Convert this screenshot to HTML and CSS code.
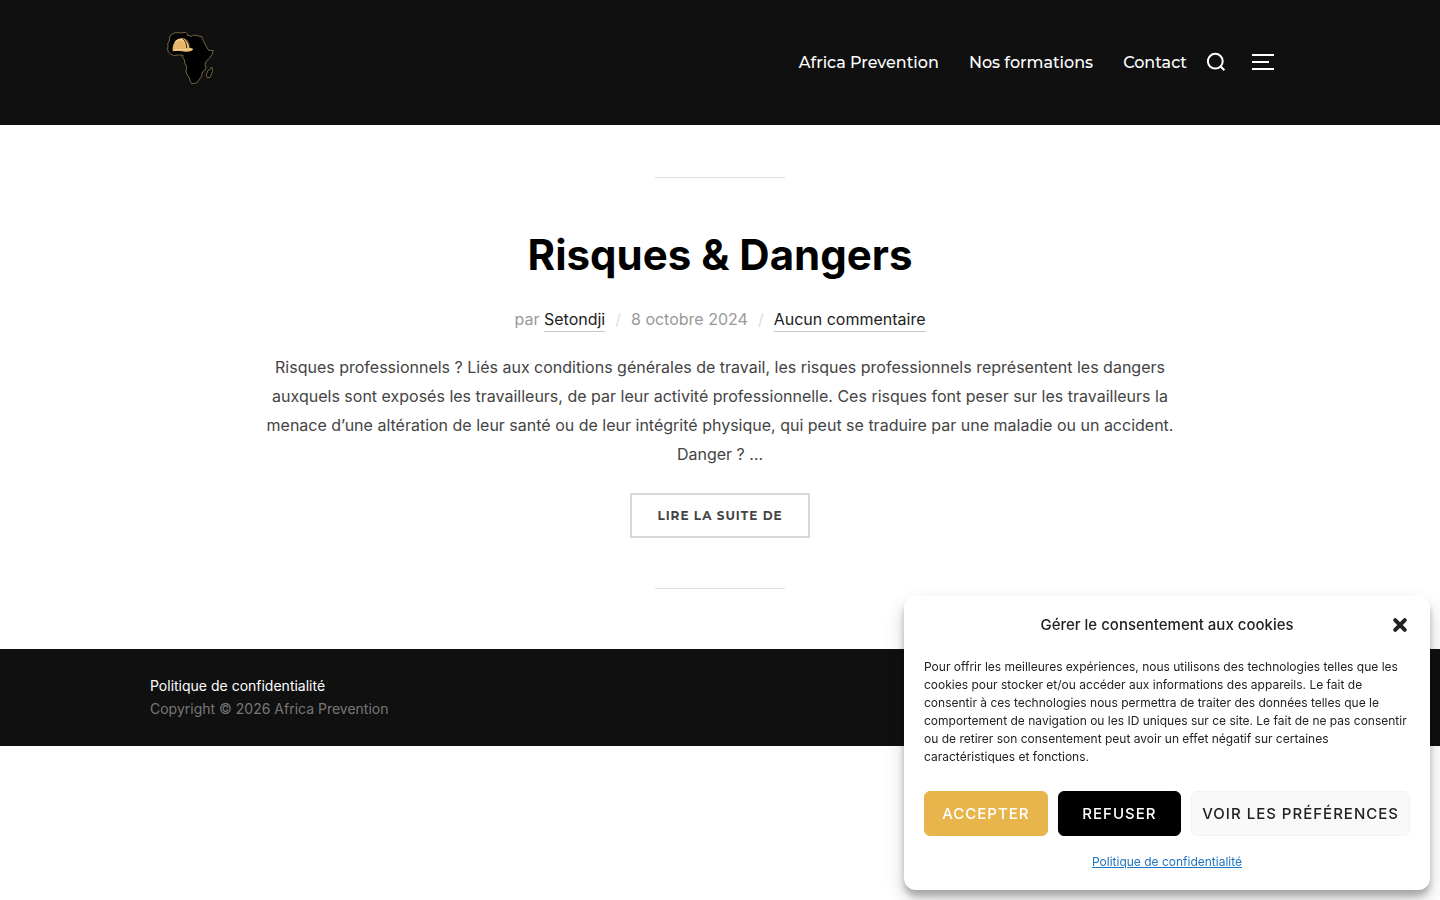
FILE: index.html
```html
<!doctype html>
<html lang="fr">
  <head>
    <meta charset="UTF-8" />
    <meta name="viewport" content="width=device-width, initial-scale=1.0" />
    <title>Africa Prevention</title>
    <link rel="stylesheet" href="styles.css">
  </head>
  <body>
    <header class="site-header">
      <div class="container header-inner">
        <a class="logo" href="#" aria-label="Africa Prevention">
          <svg width="80" height="84" viewBox="0 0 240 252">
            <path
              d="M60 48 67 42 76 38 92 39 107 37 113 42 112 46 125 49 131 45 155 50 158 58 162 66 168 78 176 91 190 92 187 102 178 115 168 124 165 134 168 143 165 150 157 156 155 168 149 177 142 187 134 190 125 191 121 184 117 172 109 159 108 151 111 143 105 130 103 119 98 113 99 106 91 105 83 105 71 107 62 102 55 96 53 88 54 79 53 72 58 63Z"
              fill="#000"
              stroke="#ab945c"
              stroke-width="2"
            />
            <path
              d="M185 141 188 151 184 163 180 172 172 173 169 165 173 153 180 149Z"
              fill="#000"
              stroke="#ab945c"
              stroke-width="2"
            />
            <path d="M68 94C66 70 79 54 98 55c14 1 22 14 22 28l10 4c-3 7-13 9-24 8-14-3-26-2-38-1Z" fill="#e8b66b" />
            <path d="M76 66c5-6 12-8 20-7 8 4 13 13 14 24" fill="none" stroke="#f4cf91" stroke-width="5" />
            <path d="M99 56c7 7 11 16 11 28m-4-27c9 7 13 16 13 26" fill="none" stroke="#2b1c0d" stroke-width="3" />
            <path d="M73 90c18-4 34 3 53-3" fill="none" stroke="#f7d99d" stroke-width="3" />
          </svg>
        </a>
        <nav class="main-nav">
          <a href="#">Africa Prevention</a>
          <a href="#">Nos formations</a>
          <a href="#">Contact</a>
        </nav>
        <button class="icon-button search-button" aria-label="Rechercher">
          <svg width="20" height="20" viewBox="0 0 20 20" fill="none" stroke="#fff" stroke-width="2">
            <circle cx="8.3" cy="9.2" r="7.4" />
            <path d="M13.4 14.3 17.4 18.3" />
          </svg>
        </button>
        <button class="icon-button menu-button" aria-label="Menu">
          <svg width="22" height="16" viewBox="0 0 22 16" fill="#fff">
            <path d="M0 0h22v2H0zM0 7h17v2H0zM0 14h22v2H0z" />
          </svg>
        </button>
      </div>
    </header>

    <main class="content">
      <article class="post">
        <h1>Risques &amp; Dangers</h1>
        <div class="post-meta">
          <span>par <a href="#">Setondji</a></span>
          <span class="slash">/</span>
          <span>8 octobre 2024</span>
          <span class="slash">/</span>
          <span><a href="#">Aucun commentaire</a></span>
        </div>
        <p class="excerpt">
          Risques professionnels ? Liés aux conditions générales de travail, les risques professionnels
          représentent les dangers auxquels sont exposés les travailleurs, de par leur activité
          professionnelle. Ces risques font peser sur les travailleurs la menace d’une altération de
          leur santé ou de leur intégrité physique, qui peut se traduire par une maladie ou un
          accident. Danger ? …
        </p>
        <a class="more-link" href="#">Lire la suite de</a>
      </article>
    </main>

    <footer class="site-footer">
      <div class="container">
        <a href="#">Politique de confidentialité</a>
        <p>Copyright © 2026 Africa Prevention</p>
      </div>
    </footer>

    <section class="cookie-banner" role="dialog" aria-labelledby="cookie-title">
      <div class="cookie-header">
        <h2 id="cookie-title">Gérer le consentement aux cookies</h2>
        <button class="icon-button cookie-close" aria-label="Fermer">
          <svg width="16" height="16" viewBox="0 0 16 16" stroke="#222" stroke-width="4" stroke-linecap="round">
            <path d="M3.2 3.2 12.8 12.8M12.8 3.2 3.2 12.8" />
          </svg>
        </button>
      </div>
      <p class="cookie-text">
        Pour offrir les meilleures expériences, nous utilisons des technologies telles que les cookies
        pour stocker et/ou accéder aux informations des appareils. Le fait de consentir à ces
        technologies nous permettra de traiter des données telles que le comportement de navigation ou
        les ID uniques sur ce site. Le fait de ne pas consentir ou de retirer son consentement peut
        avoir un effet négatif sur certaines caractéristiques et fonctions.
      </p>
      <div class="cookie-buttons">
        <button class="btn btn-accept">Accepter</button>
        <button class="btn btn-deny">Refuser</button>
        <button class="btn btn-prefs">Voir les préférences</button>
      </div>
      <div class="cookie-links">
        <a href="#">Politique de confidentialité</a>
      </div>
    </section>
  </body>
</html>
```
FILE: styles.css
```css
* {
  box-sizing: border-box;
}
body {
  margin: 0;
  font-family: Inter, sans-serif;
  font-size: 16px;
  color: #444;
  background: #fff;
}
h1,
h2,
p {
  margin: 0;
}
.container {
  max-width: 1140px;
  margin: 0 auto;
}

/* Header */
.site-header {
  background: #101010;
}
.header-inner {
  display: flex;
  align-items: center;
  padding: 20px 16px 21px 0;
}
.logo {
  display: flex;
  margin-right: auto;
}
.main-nav {
  display: flex;
  gap: 30px;
  padding-top: 2px;
}
.main-nav a {
  font-family: Montserrat, Inter, sans-serif;
  font-weight: 500;
  line-height: 24px;
  color: #fff;
  text-decoration: none;
}
.icon-button {
  display: flex;
  padding: 0;
  border: none;
  background: none;
  cursor: pointer;
}
.search-button {
  margin-left: 20px;
}
.menu-button {
  margin-left: 25px;
}

/* Post */
.content {
  max-width: 950px;
  margin: 0 auto;
  padding: 52px 20px 60px;
}
.post {
  display: flex;
  flex-direction: column;
  align-items: center;
  text-align: center;
}
.post::before,
.post::after {
  content: "";
  width: 130px;
  height: 1px;
  background: #e0e0e0;
}
.post h1 {
  margin-top: 50px;
  font-size: 42px;
  font-weight: 700;
  line-height: 54px;
  color: #000;
}
.post-meta {
  display: flex;
  gap: 10px;
  margin-top: 25px;
  line-height: 24px;
  color: #999;
}
.post-meta a {
  padding-bottom: 2px;
  color: #222;
  text-decoration: none;
  border-bottom: 1px solid #c7c7c7;
}
.slash {
  color: #ddd;
}
.excerpt {
  margin-top: 22px;
  line-height: 29px;
}
.more-link {
  margin: 24px 0 50px;
  padding: 0 25px;
  border: 2px solid #d8d8d8;
  font-family: Montserrat, Inter, sans-serif;
  font-size: 12px;
  font-weight: 700;
  line-height: 41px;
  letter-spacing: 1px;
  text-transform: uppercase;
  text-decoration: none;
  color: #444;
}

/* Footer */
.site-footer {
  padding: 25px 0 26px;
  background: #101010;
  font-size: 14px;
  line-height: 23px;
  color: #777;
}
.site-footer a {
  color: #fff;
  text-decoration: none;
}

/* Cookie consent */
.cookie-banner {
  position: fixed;
  right: 10px;
  bottom: 10px;
  width: 526px;
  max-width: calc(100% - 20px);
  padding: 18px 20px 19px;
  border-radius: 12px;
  background: #fff;
  box-shadow:
    rgba(0, 0, 0, 0.19) 0 10px 20px,
    rgba(0, 0, 0, 0.23) 0 6px 6px;
  color: #222;
  text-align: center;
}
.cookie-header {
  display: grid;
  grid-template-columns: 20px 1fr 20px;
  align-items: center;
}
.cookie-header h2 {
  grid-column: 2;
  font-size: 15px;
  font-weight: 500;
  line-height: 22px;
}
.cookie-close {
  justify-content: center;
}
.cookie-text {
  margin-top: 22px;
  font-size: 12px;
  line-height: 18px;
  text-align: left;
}
.cookie-buttons {
  display: flex;
  gap: 10px;
  margin: 25px 0 17px;
}
.btn {
  height: 45px;
  padding: 0 10px;
  border: 1px solid;
  border-radius: 6px;
  font-family: inherit;
  font-size: 15px;
  font-weight: 500;
  letter-spacing: 1px;
  text-transform: uppercase;
  white-space: nowrap;
  cursor: pointer;
}
.btn-accept,
.btn-deny {
  flex: 1;
}
.btn-accept {
  border-color: #e8b44c;
  background: #e8b44c;
  color: #fff;
}
.btn-deny {
  border-color: #000;
  background: #000;
  color: #fff;
}
.btn-prefs {
  border-color: #f2f2f2;
  background: #f9f9f9;
  color: #222;
}
.cookie-links {
  font-size: 12px;
  line-height: 18px;
}
.cookie-links a {
  color: #1e73be;
}
```
